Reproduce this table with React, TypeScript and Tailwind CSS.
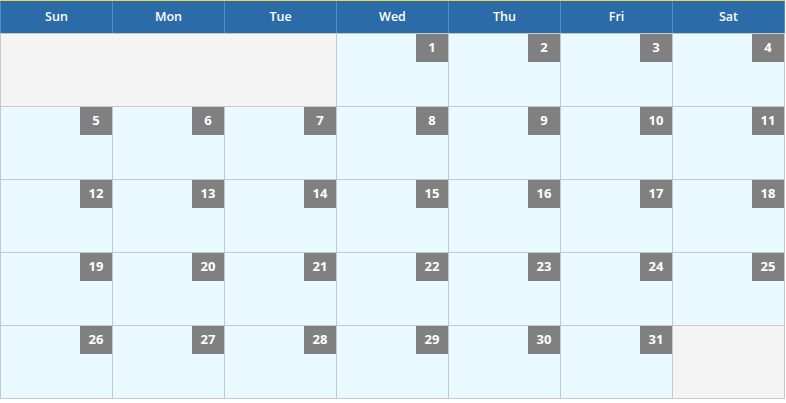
const DAYS = ["Sun", "Mon", "Tue", "Wed", "Thu", "Fri", "Sat"];

// month starts on Wednesday; the leading blank spans Sun–Tue
const DATES = Array.from({ length: 31 }, (_, i) => i + 1);

function DayCell({ day }: { day: number }) {
  return (
    <div className="flex h-[72px] justify-end bg-[#e8faff]">
      <div className="flex h-[28px] w-[32px] items-center justify-center bg-[#808080] text-[13px] font-bold text-white">
        {day}
      </div>
    </div>
  );
}

export default function App() {
  return (
    <div className="h-[403px] w-[786px] bg-white font-['Open_Sans',sans-serif]">
      <div className="w-[785px]">
        <div className="grid grid-cols-[repeat(7,111px)] gap-px border-t border-[#e8d84a] bg-[#4a8fd0] px-px">
          {DAYS.map((d) => (
            <div
              key={d}
              className="flex h-[32px] items-center justify-center bg-[#2b6ca8] text-[12.5px] font-semibold text-white"
            >
              {d}
            </div>
          ))}
        </div>
        <div className="grid grid-cols-[repeat(7,111px)] gap-px bg-[#c8c8c8] p-px">
          <div className="col-span-3 h-[72px] bg-[#f4f4f4]" />
          {DATES.map((day) => (
            <DayCell key={day} day={day} />
          ))}
          <div className="h-[72px] bg-[#f4f4f4]" />
        </div>
      </div>
    </div>
  );
}
